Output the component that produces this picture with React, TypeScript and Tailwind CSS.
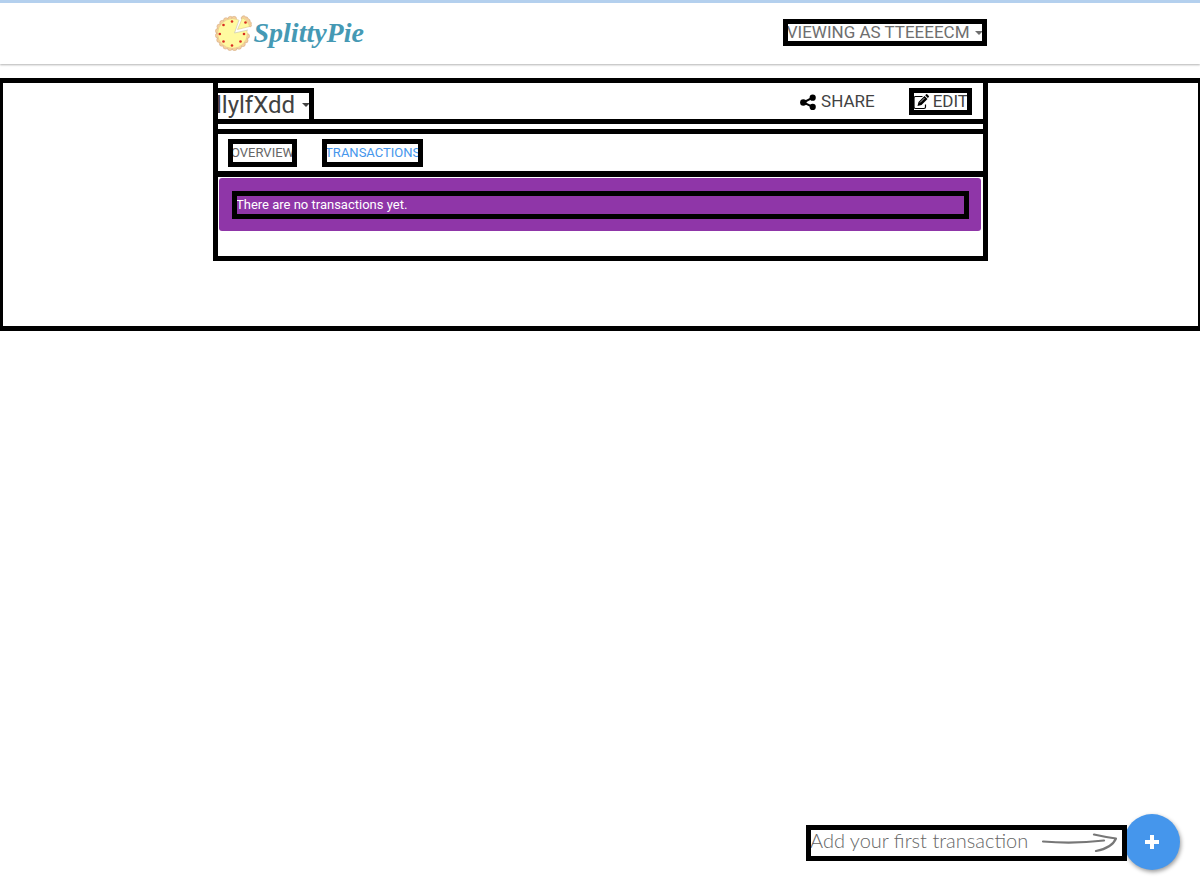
import React from "react";

const frame = "outline-[5px] outline-solid outline-black -outline-offset-[5px]";

const crustAngles = [10, 28, 46, 64, 82, 100, 118, 136, 154, 172, 190, 208, 226, 244, 262, 276];

function PieLogo() {
  return (
    <svg className="h-9 w-[38px] shrink-0" viewBox="0 0 38 36" aria-hidden="true">
      <g fill="#f6cf9c" stroke="#cfa77c" strokeWidth="0.5">
        {crustAngles.map((a) => {
          const r = (a * Math.PI) / 180;
          return <circle key={a} cx={17.5 + 14.8 * Math.cos(r)} cy={18.5 + 14.8 * Math.sin(r)} r="2.500" />;
        })}
      </g>
      <circle cx="17.500" cy="18.500" r="14.800" fill="#fffaa0" stroke="#e3c48c" strokeWidth="0.5" />
      <path d="M19.500 18L25 1L38 0V14Z" fill="#fff" />
      <path d="M19.500 18L24 5M19.500 18L33 15" stroke="#c9c9b0" strokeWidth="0.7" />
      <path d="M27.500 1q2-.8 3 .8q2.300-.2 2.700 1.900q2.200.7 2 2.800q1.800 1.200 1 3q.8 1.200-.4 2.300L32 11L26 3Z" fill="#f6cf9c" stroke="#cfa77c" strokeWidth="0.6" />
      <path d="M22.500 14.500L27.500 2.800Q33 5.500 34.800 11.500Z" fill="#fffaa0" stroke="#d8ba80" strokeWidth="0.5" />
      <g fill="#d92c22">
        {[
          [17, 6.5], [8.5, 10], [4.8, 19], [8.5, 26.5], [17, 30.5],
          [25.5, 26.5], [29, 19], [30.5, 7.5],
        ].map(([x, y]) => (
          <circle key={`${x}-${y}`} cx={x} cy={y} r="1.3" />
        ))}
      </g>
    </svg>
  );
}

function Caret() {
  return (
    <svg className="h-1 w-2 shrink-0" viewBox="0 0 8 4" aria-hidden="true">
      <path d="M0 0h8L4 4z" fill="currentColor" />
    </svg>
  );
}

function ShareIcon() {
  return (
    <svg className="size-4 shrink-0 text-black" viewBox="0 0 16 16" fill="currentColor" aria-hidden="true">
      <circle cx="3.300" cy="8.500" r="3.200" />
      <circle cx="12.700" cy="3.700" r="3.100" />
      <circle cx="12.700" cy="12.900" r="3.100" />
      <path d="M12.700 3.700L3.300 8.500l9.400 4.400" fill="none" stroke="currentColor" strokeWidth="2" />
    </svg>
  );
}

function EditIcon() {
  return (
    <svg className="size-4 shrink-0 text-black" viewBox="0 0 16 16" aria-hidden="true">
      <path d="M9.500 2.500H2.500Q1 2.500 1 4v9q0 1.500 1.500 1.500h8.500q1.500 0 1.500-1.500v-2.500" fill="none" stroke="currentColor" strokeWidth="1.200" />
      <path d="M4.500 12l1-4 6-6 3 3-6 6z" fill="currentColor" />
      <path d="M12.200 1.300l1-1q.5-.4 1 0l1.600 1.600q.4.500 0 1l-1 1z" fill="currentColor" />
      <path d="M7 8.500l4.500-4.500" stroke="#fff" strokeWidth="0.700" />
    </svg>
  );
}

export default function App() {
  return (
    <div className="min-h-screen overflow-x-hidden bg-white font-['Roboto',sans-serif] text-[#424242]">
      <header className="border-t-[3px] border-[#b4d0ee] shadow-[0_1px_2px_rgba(0,0,0,0.3)]">
        <div className="mx-auto flex h-[61px] max-w-[775px] items-center justify-between pr-px pb-0.5 pl-0.5">
          <a href="#home" className="flex items-center gap-px">
            <PieLogo />
            <span className="font-['Liberation_Serif',serif] text-[28px] leading-8 font-bold text-[#4599b4] italic">SplittyPie</span>
          </a>
          <button className={`flex h-[27px] items-center gap-[5px] px-1 text-[17px] text-[#6e6e6e] ${frame}`}>
            VIEWING AS TTEEEECM
            <Caret />
          </button>
        </div>
      </header>

      <main className={`mt-3.5 -mr-[3px] -ml-0.5 pb-[70px] ${frame}`}>
        <div className={`mx-auto max-w-[775px] pb-[30px] ${frame}`}>
          <div className={`flex items-start justify-between pt-2.5 pr-4 ${frame}`}>
            <button className={`flex h-9 items-center gap-[7px] pr-1 pb-0.5 pl-[3px] text-2xl leading-8 ${frame}`}>
              llylfXdd
              <Caret />
            </button>
            <div className="flex gap-[30px] text-[17px]">
              <button className="flex h-[27px] items-center gap-[5px] px-1">
                <ShareIcon />
                SHARE
              </button>
              <button className={`flex h-[27px] items-center gap-1 px-1 ${frame}`}>
                <EditIcon />
                EDIT
              </button>
            </div>
          </div>

          <nav className={`mt-[5px] flex gap-[25px] border-b-[6px] border-black px-[15px] pt-2.5 pb-1 text-[13px] ${frame}`}>
            <a href="#overview" className={`flex h-7 items-center px-[3px] text-[#666] ${frame}`}>OVERVIEW</a>
            <a href="#transactions" className={`flex h-7 items-center px-[3px] text-[#4596ec] ${frame}`}>TRANSACTIONS</a>
          </nav>

          <div className="mt-px mr-[7px] ml-1.5 rounded-[3px] bg-[#8f36a8] pt-[13px] pr-3 pb-3 pl-[13px]">
            <p className={`h-7 px-1 text-[13px] leading-7 text-white ${frame}`}>There are no transactions yet.</p>
          </div>
        </div>
      </main>

      <div className="fixed right-5 bottom-5 flex items-center">
        <div className={`relative z-10 mt-0.5 -mr-[3px] flex h-9 w-[321px] items-center justify-between bg-white pr-2.5 pl-1 ${frame}`}>
          <span className="pb-1.5 font-['Lato',cursive] text-xl leading-6 font-light whitespace-nowrap text-[#666]">Add your first transaction</span>
          <svg className="h-5 w-[75px] shrink-0" viewBox="0 0 75 20" fill="none" stroke="#777" strokeWidth="2.200" strokeLinecap="round" strokeLinejoin="round" aria-hidden="true">
            <path d="M1 8.500Q32 11 62 7.500" />
            <path d="M52 1.500Q63 4 74 5.500Q70 15 54 18" />
          </svg>
        </div>
        <button aria-label="Add transaction" className="flex size-14 items-center justify-center rounded-full bg-[#4596ec] text-white shadow-[1px_2px_4px_rgba(0,0,0,0.4)]">
          <svg className="size-3.5" viewBox="0 0 14 14" fill="currentColor" aria-hidden="true">
            <path d="M5 0h4v5h5v4H9v5H5V9H0V5h5z" />
          </svg>
        </button>
      </div>
    </div>
  );
}
